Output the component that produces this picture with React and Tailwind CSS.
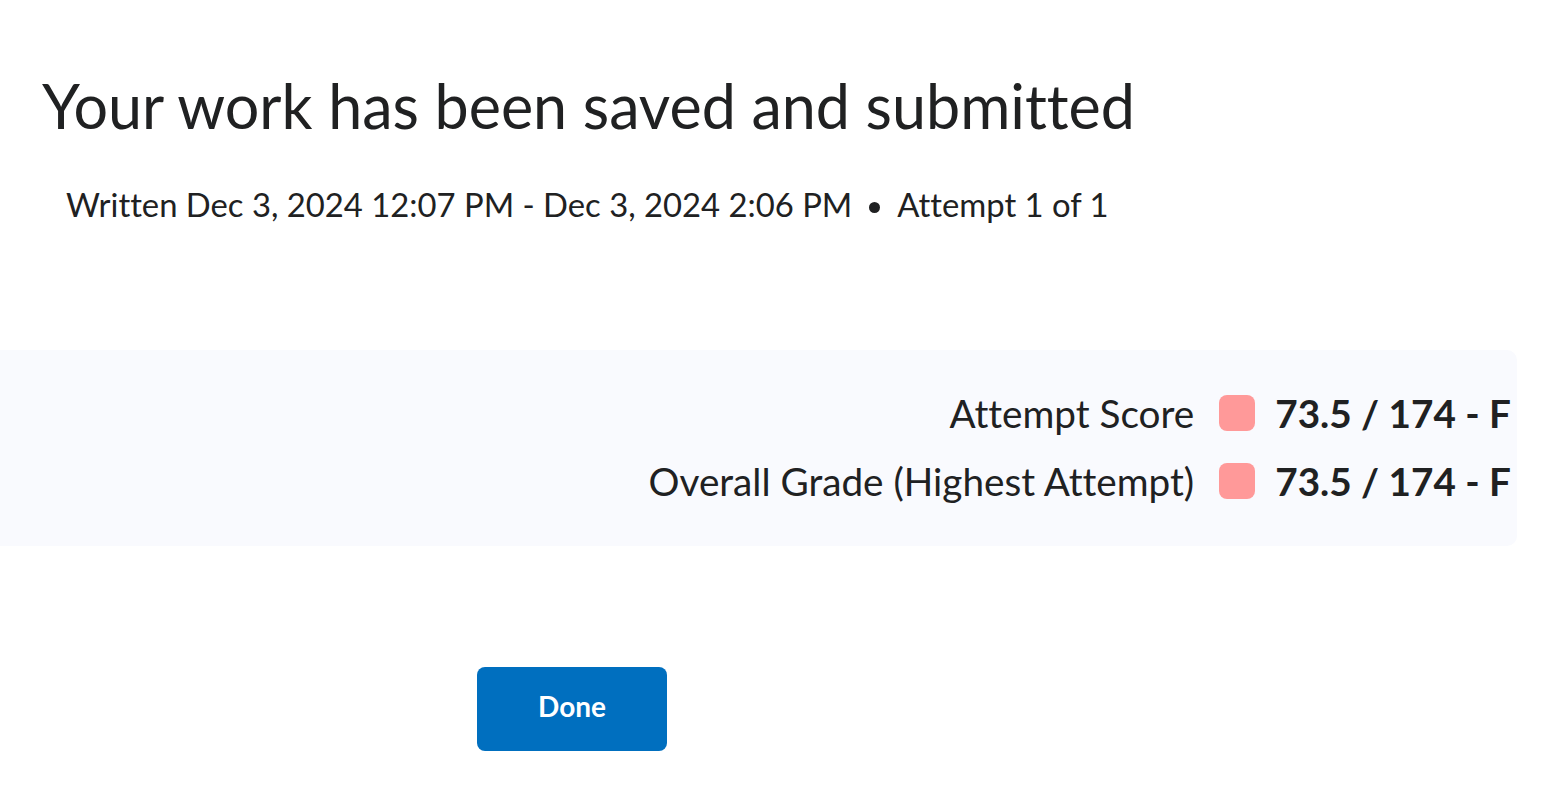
export default function App() {
  const scores = [
    { label: 'Attempt Score', value: '73.5 / 174 - F' },
    { label: 'Overall Grade (Highest Attempt)', value: '73.5 / 174 - F' },
  ];

  return (
    <div className="min-h-screen bg-white text-[#202122] font-['Lato','Liberation_Sans',sans-serif] [font-variant-ligatures:none]">
      <div className="pl-[42px] pt-[70px]">
        <h1 className="text-[61px] leading-[72px] font-normal">Your work has been saved and submitted</h1>
        <p className="mt-[43px] pl-[24px] text-[32.8px] leading-[40px] flex items-center">
          <span>Written Dec 3, 2024 12:07 PM - Dec 3, 2024 2:06 PM</span>
          <span className="mx-[17px] mt-[4px] inline-block w-[11px] h-[11px] rounded-full bg-[#202122]" />
          <span>Attempt 1 of 1</span>
        </p>
      </div>

      {/* Score summary */}
      <div className="mt-[125px] w-[1517px] bg-[#f9fafe] rounded-r-[10px] pt-[43px] pb-[45px] pr-[6px] flex flex-col items-end gap-[28px]">
        {scores.map((s) => (
          <div key={s.label} className="flex items-center h-[40px]">
            <span className="text-[38.7px] leading-[40px]">{s.label}</span>
            <span className="ml-[25px] w-[36px] h-[36px] rounded-[8px] bg-[#ff9999]" />
            <span className="ml-[20px] text-[38.7px] leading-[40px] font-bold">{s.value}</span>
          </div>
        ))}
      </div>

      <div className="mt-[121px] pl-[477px]">
        <button className="w-[190px] h-[84px] pb-[6px] rounded-[8px] bg-[#006fbf] text-white text-[28px] font-bold">
          Done
        </button>
      </div>
    </div>
  );
}
